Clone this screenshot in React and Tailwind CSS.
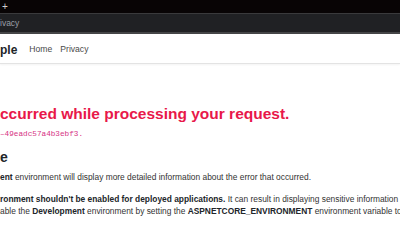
export default function App() {
  return (
    <div className="w-[400px] h-[250px] overflow-hidden bg-white font-['Liberation_Sans',Arial,sans-serif]">
      {/* browser chrome */}
      <div className="h-[13px] bg-[#080405] flex items-center pl-[2px] pt-[1px]">
        <span className="text-[#cfcfcf] text-[10px] leading-none">+</span>
      </div>
      <div className="h-[21px] bg-[#202124] border-t border-t-[#3a3a3c] border-b-2 border-b-[#454547] flex items-center pt-[1px]">
        <span className="text-[#9a9ea4] text-[8.5px] leading-none whitespace-nowrap">ivacy</span>
      </div>

      {/* navbar */}
      <div className="h-[30px] border-b border-[#e3e3e3] shadow-[0_1px_2px_rgba(0,0,0,0.05)] flex items-center pt-[2px] whitespace-nowrap">
        <span className="text-[12px] text-[#212529] font-bold">ple</span>
        <span className="ml-[12px] text-[8.6px] text-[#4a4a4a]">Home</span>
        <span className="ml-[8px] text-[8.6px] text-[#4a4a4a]">Privacy</span>
      </div>

      {/* content */}
      <div className="whitespace-nowrap">
        <div className="mt-[40px] h-[20px] text-[15.5px] leading-[20px] font-bold text-[#e8184a]">ccurred while processing your request.</div>
        <div className="mt-[5px] h-[10px] text-[7.7px] leading-[10px] text-[#d63384] font-['Liberation_Mono',monospace]">–49eadc57a4b3ebf3.</div>
        <div className="mt-[9px] h-[18px] text-[14px] leading-[18px] font-bold text-[#212529]">e</div>
        <div className="mt-[5px] h-[12px] text-[8.4px] leading-[12px] text-[#333]">
          <b className="text-[#212529]">ent</b> environment will display more detailed information about the error that occurred.
        </div>
        <div className="mt-[10px] h-[12px] text-[8.4px] leading-[12px] text-[#333]">
          <b className="text-[#212529]">ronment shouldn't be enabled for deployed applications.</b> It can result in displaying sensitive information from exceptions to end users.
        </div>
        <div className="h-[12px] text-[8.4px] leading-[12px] text-[#333]">
          able the <b className="text-[#212529]">Development</b> environment by setting the <b className="text-[#212529]">ASPNETCORE_ENVIRONMENT</b> environment variable to <b className="text-[#212529]">Development</b>
        </div>
      </div>
    </div>
  );
}
